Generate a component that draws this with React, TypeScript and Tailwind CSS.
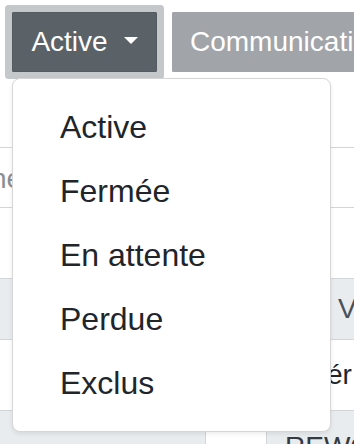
const statuses = ['Active', 'Fermée', 'En attente', 'Perdue', 'Exclus'];

export default function App() {
  return (
    <div className="relative w-[354px] h-[444px] overflow-hidden bg-white font-['Liberation_Sans',Arial,sans-serif]">
      {/* toolbar */}
      <div className="flex items-start gap-[15px] pt-[12px] pl-[12px]">
        <button className="w-[145px] shrink-0 flex items-center justify-center rounded-[1px] border border-[#545b62] bg-[#5a6268] py-[8px] text-[28px] leading-[42px] text-white shadow-[0_0_0_7px_#c4c8cb]">
          Active
          <span className="ml-[16px] mb-[3px] inline-block h-0 w-0 border-t-[7px] border-x-[7px] border-t-white border-x-transparent" />
        </button>
        <button className="w-[230px] shrink-0 whitespace-nowrap text-left rounded-[1px] border border-[#a1a5a9] bg-[#a1a5a9] px-[17px] py-[8px] text-[28px] leading-[42px] text-white">
          Communication
        </button>
      </div>

      {/* page content behind the menu */}
      <div className="mt-[75px] text-[28px]">
        <div className="h-[61px] border-y border-[#d3d6d9] flex items-center pt-[2px]">
          <span className="ml-[-9px] text-[#8a8f94]">né</span>
        </div>
        <div className="h-[70px]" />
        <div className="h-[62px] border-y border-[#d3d6d9] bg-[#e9ecef] flex items-center">
          <span className="ml-[338px] text-[#495057]">V</span>
        </div>
        <div className="h-[70px] flex items-end pb-[14px]">
          <span className="ml-[327px] text-[#212529]">ér</span>
        </div>
        <div className="h-[40px] border-t border-[#d3d6d9] bg-[#e9ecef] flex">
          <div className="w-[205px] shrink-0" />
          <div className="w-[62px] shrink-0 bg-white border-x border-[#d3d6d9]" />
          <span className="pl-[18px] pt-[20px] leading-[32px] text-[#343a40] whitespace-nowrap">REWORK</span>
        </div>
      </div>

      {/* dropdown menu */}
      <div className="absolute left-[12px] top-[78px] w-[319px] rounded-[8px] border border-[#d6d6d6] bg-white py-[16px] shadow-[0_2px_4px_rgba(0,0,0,0.08)]">
        {statuses.map((s) => (
          <div key={s} className="px-[47px] py-[8px] text-[32px] leading-[48px] text-[#212529]">
            {s}
          </div>
        ))}
      </div>
    </div>
  );
}
